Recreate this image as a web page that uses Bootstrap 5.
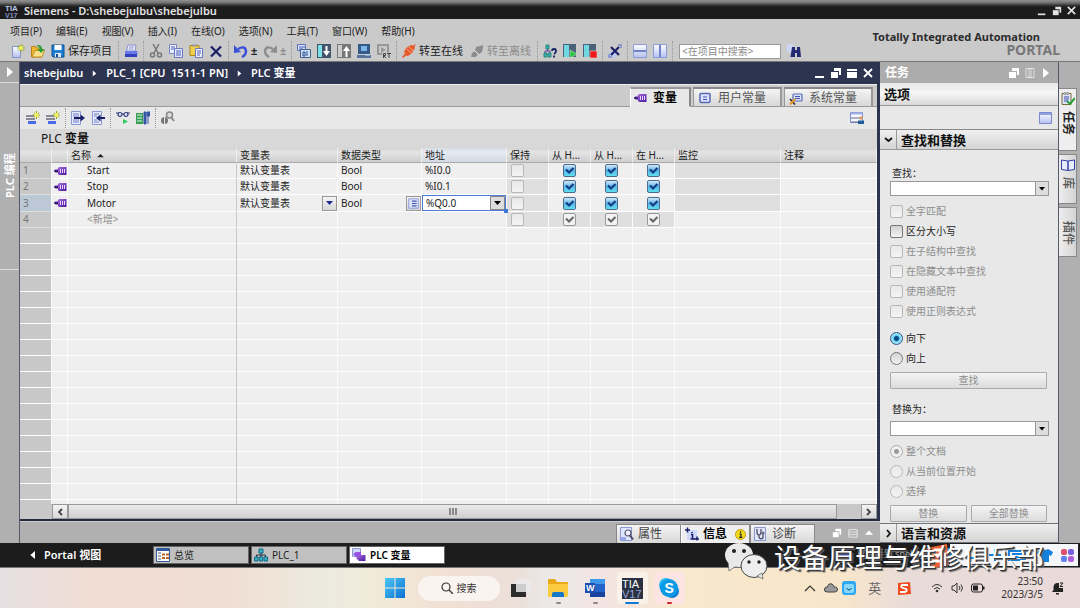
<!DOCTYPE html>
<html lang="zh-CN">
<head>
<meta charset="utf-8">
<meta name="viewport" content="width=device-width, initial-scale=1">
<title>Siemens - D:\shebejulbu\shebejulbu</title>
<link href="https://cdn.jsdelivr.net/npm/bootstrap@5.3.0/dist/css/bootstrap.min.css" rel="stylesheet">
<style>
:root{--navy:#2d3450;--strip:#cacaca;--panel:#e8e8e8;--rail:#b0b0b0;--line:#8e8e8e;--face:linear-gradient(#f4f4f4,#d8d8d8)}
body{font-family:"Noto Sans","Noto Sans CJK SC",sans-serif;font-size:10px;line-height:16px;color:#222;background:#cacaca}
button{border:0;background:none;padding:0;color:inherit;font:inherit;line-height:16px}
a{color:inherit;text-decoration:none}
svg{display:block;flex:none}
.i14{width:14px;height:14px}
.titlebar{height:19px;background:linear-gradient(#929292,#6e6e6e 3px,#3a3a3a 5px,#1c1c1c 7px);color:#e2e2e2;font-size:11px;font-weight:600;padding:2px 3px 0 5px}
.apphead{background:var(--strip);height:43px;border-bottom:1px solid #777}
.menus{gap:14px;padding:4px 10px 0;height:21px}
.tools{height:22px;padding-left:8px;font-size:11px}
.tbtn{display:flex;align-items:center;padding:0 3px;height:20px}
.tbtn.wide{width:68px;gap:3px;white-space:nowrap}
.tbtn.pm{padding:0;width:9px}
.tsep{width:1px;height:20px;margin:0 2px;border-left:1px dotted #999;flex:none}
.off{color:#8d8d8d}
.seek{width:102px;height:15px;border:1px solid #999;background:#fff;font-size:10px;padding:0 2px;margin:0 3px 0 4px;border-radius:0;line-height:13px;outline:0}
.seek::placeholder{color:#8a8a8a;opacity:1}
.brand{padding:12px 20px 0 0;text-align:right;line-height:12px;font-weight:700;font-size:11px;color:#2c2c2c}
.brand div+div{color:#777;font-size:14px;margin-right:-20px;line-height:14px}
.rail-l{width:20px;background:var(--rail);border-right:1px solid #555a66;color:#fff;flex:none}
.rail-l .flip{height:21px;width:100%;border-bottom:1px solid #ddd;background:#a6a6a6}
.rail-l .vert{height:187px;width:100%;writing-mode:vertical-rl;text-orientation:sideways;transform:rotate(180deg);font-weight:700;font-size:11px;line-height:17px;text-align:center;border-top:1px solid #ddd}
.work{min-width:0;background:var(--rail)}
.crumbs{height:22px;background:var(--navy);color:#fff;font-size:11px;font-weight:600;padding:0 3px 0 4px}
.crumbs .path{gap:8px}
.editor{border-right:3px solid var(--navy);border-bottom:2px solid #232a3d}
.tabstrip{height:23px;background:#cbcbcb;border-top:1px solid #eee;border-bottom:1px solid #999;padding-right:4px;gap:2px}
.etab{height:20px;width:89px;margin-bottom:-1px;border:1px solid #999;border-top:2px solid #888;border-right:2px solid #999;background:var(--face);color:#555;font-size:12px;padding:0 4px;gap:6px;display:flex;align-items:center}
.etab.now{width:61px;padding:0 2px;background:#e8e8e8;border-color:#999 #888 #e8e8e8 #fff;color:#000;font-weight:700}
.etools{height:22px;background:var(--panel);padding:0 10px 0 3px}
.caption-row{height:19px;background:#d8d8d8;font-size:12px;color:#111;padding-left:21px;line-height:19px}
.caption-row b{font-weight:600}
.gridbox{flex:1 1 auto;display:flex;background:#efefef}
.tags{table-layout:fixed;width:100%;height:100%;border-collapse:separate;border-spacing:0}
.tags th{height:15px;padding:0 3px;line-height:13px;font-weight:400;font-size:10px;background:linear-gradient(#d2d2d2,#e4e4e4 4px,#cfcfcf);border-right:1px solid #eee;border-bottom:1px solid #aaa;white-space:nowrap;overflow:hidden}
.tags th.hot{background:linear-gradient(#d5dbe4,#e6ebf3 4px,#d3dae5)}
.tags td{height:16px;padding:0 3px;line-height:15px;border-bottom:1px solid #fff;border-right:1px solid #fafafa;white-space:nowrap;overflow:hidden}
.tags td:first-child{background:#c8c8c8;color:#777;border-bottom-color:#ddd}
.tags tr.cur td:first-child{background:#bcc8d6}
.tags .nm{padding-left:19px}
.tags td.dim{background:#dfdfdf}
.tags .mid{text-align:center;padding:0}
.tags .rest td{height:auto;border-bottom:0;background-image:repeating-linear-gradient(transparent 0 15px,#fff 15px 16px)}
.tags td:nth-child(3),.tags .rest td:nth-child(3){border-right-color:#c8c8c8}
.tags .kind{padding:0 1px}
.mini{width:15px;height:15px;border:1px solid #999;background:var(--face);display:flex;align-items:center;justify-content:center}
.tags td.edit{padding:0;overflow:visible;position:relative}
.addr{display:block;width:100%;height:16px;appearance:none;border:1px solid #4a7bd0;border-radius:0;padding:0 3px;font-size:10px;line-height:12px;color:#222;outline:0;background:#fff url("data:image/svg+xml,%3Csvg xmlns='http://www.w3.org/2000/svg' width='15' height='14'%3E%3Cpath fill='%23ddd' stroke='%23888' d='M.5.5h14v13H.5z'/%3E%3Cpath d='M4 5h7l-3.500 4z'/%3E%3C/svg%3E") right center no-repeat}
.knob{position:absolute;right:-2px;bottom:-2px;width:4px;height:4px;background:#3c78d8;z-index:1}
.tick,.dot{appearance:none;flex:none;width:13px;height:13px;margin:0;border:1px solid #777;border-radius:2px;background:linear-gradient(#d2d2d2,#f2f2f2);vertical-align:middle}
.dot{border-radius:50%}
.tags .tick{display:inline-block;vertical-align:top;margin-top:1px}
.tick:disabled,.dot:disabled{border-color:#b8b8b8;background:linear-gradient(#e8e8e8,#f4f4f4)}
.tick:checked{border-color:#4d6d8c;background:url("data:image/svg+xml,%3Csvg xmlns='http://www.w3.org/2000/svg' viewBox='0 0 11 11'%3E%3Cpath fill='none' stroke='%23123f86' stroke-width='2.200' d='M2 4.500l3 3L9.500 3'/%3E%3C/svg%3E"),linear-gradient(#d4e8f8,#5cb4e8 50%,#5fe0ee)}
.tick:checked:disabled{border-color:#999;background:url("data:image/svg+xml,%3Csvg xmlns='http://www.w3.org/2000/svg' viewBox='0 0 11 11'%3E%3Cpath fill='none' stroke='%23666' stroke-width='2' d='M2 4.500l3 3L9.500 3'/%3E%3C/svg%3E"),#f2f2f2}
.dot:checked{border-color:#31567c;background:radial-gradient(#0c4a86 0 2px,#62ccf2 3px,#a5e6fa 5px,#3f9fd0)}
.dot:checked:disabled{border-color:#aaa;background:radial-gradient(#999 0 2px,#f0f0f0 3px)}
.hscroll{height:15px;margin-left:32px}
.hwrap{background:#c8c8c8}
.sbtn{width:16px;height:15px;border:1px solid #999;background:var(--face);display:flex;align-items:center;justify-content:center}
.thumb{flex:1;margin-right:24px;border:1px solid #999;background:linear-gradient(#eaeaea,#cfcfcf);display:flex;align-items:center;justify-content:center;gap:1px}
.thumb i{width:2px;height:7px;background:#888}
.inspector{height:22px;border-top:1px solid #ccc;padding:2px 5px 0 0}
.itab{width:65px;height:19px;border:1px solid #888;border-bottom:0;background:var(--face);font-size:12px;color:#444;display:flex;align-items:center;gap:4px;padding:0 3px}
.itab.now{width:69px;background:#eee;color:#000;font-weight:700;border-left-color:#fff}
.tasks{width:179px;background:var(--panel);flex:none;border-right:1px solid #555a66}
.tasks .thead-bar{height:21px;background:#acacac;color:#fff;font-size:12px;font-weight:600;padding:0 6px 0 5px}
.tasks .opts{height:23px;border-bottom:1px solid #999;background:linear-gradient(#e8e8e8,#f6f6f6 10px,#d8d8d8);font-size:13px;font-weight:700;color:#111;padding-left:4px;line-height:22px}
.tasks .otools{height:24px;padding:0 5px;border-bottom:1px solid #888}
.fold{height:20px;width:100%;border-bottom:1px solid #999;background:linear-gradient(#efefef,#d4d4d4);font-size:13px;font-weight:700;color:#111;display:flex;align-items:center}
.fold .chev{width:17px;height:19px;border-right:1px solid #999;display:flex;align-items:center;justify-content:center;margin-right:4px}
.find{padding:15px 10px 0;flex:1}
.find .cap{height:16px;padding-left:2px;display:block}
.combo{display:block;width:159px;height:15px;appearance:none;border:1px solid #999;border-radius:0;outline:0;background:#fff url("data:image/svg+xml,%3Csvg xmlns='http://www.w3.org/2000/svg' width='13' height='13'%3E%3Cpath fill='%23ddd' stroke='%23999' d='M.5-.5h14v14H.5z'/%3E%3Cpath d='M4 5h6L7 8.500z'/%3E%3C/svg%3E") right center no-repeat}
.opt{height:20px;display:flex;align-items:center;gap:3px;white-space:nowrap}
.optset{margin-top:5px}
.optset+.optset{margin-top:7px}
.push{height:17px;border:1px solid #aaa;border-radius:1px;background:linear-gradient(#f4f4f4,#dcdcdc);color:#8d8d8d;line-height:15px;width:157px;display:block}
.push+.cap{margin-top:12px}
.pair{width:157px}
.rail-r{width:21px;background:var(--rail);flex:none;padding:26px 3px 0 0;gap:3px}
.vtab{width:18px;height:50px;border:1px solid #888;border-left:0;background:linear-gradient(90deg,#eee,#d4d4d4);display:flex;flex-direction:column;align-items:center;gap:5px;padding-top:3px;font-size:12px;color:#555;font-weight:500}
.vtab span{writing-mode:vertical-rl;text-orientation:sideways;line-height:14px}
.vtab.now{height:63px;color:#222;background:#eee;font-weight:600}
.portal{height:25px;background:#1c1c1c;border-bottom:1px solid #777;padding:3px 2px 0 0;position:relative}
.portal .go{width:153px;padding-left:29px;color:#fff;font-weight:600;font-size:11px;height:18px;gap:7px}
.wtab{width:96px;height:18px;margin-right:2px;background:#c0c0c0;border:1px solid #666;display:flex;align-items:center;gap:4px;padding:0 2px}
.wtab.now{background:#fff;font-weight:600;color:#000}
.ime{width:128px;height:22px;margin-top:-2px;background:#f4f6fa}
.conn{color:#aaa;font-size:9px;white-space:nowrap}
.mark-over{position:absolute;right:36px;top:-1px;color:#fff;z-index:3;gap:6px;pointer-events:none}
.mark-over span{font-size:27px;line-height:32px;text-shadow:1px 1px 0 #333,2px 2px 1px #666}
.desk{height:40px;padding-left:8px;color:#333;background:linear-gradient(90deg,#e6dfe2,#f2ddd3 9%,#efdcd2 20%,#f0e2d6 24%,#ecebe0 30%,#f1ead8 35%,#f1dfd4 42%,#ebe0da 48%,#ebe9e8 51%,#f3e4e2 56%,#f8e8cc 64%,#f8e6ca 78%,#e9dcd8 84%,#e9dad9)}
.desk .side{flex:1 1 0;min-width:0}
.desk .hit{width:31px;height:32px;margin:0 3px;border-radius:4px;position:relative;display:flex;align-items:center;justify-content:center}
.desk .hit::after{content:"";position:absolute;bottom:0;width:5px;height:2px;border-radius:1px;background:var(--u,transparent)}
.desk .hit.live{background:#faf1e8}
.desk .hit.live::after{width:14px}
.pill{width:82px;height:25px;border-radius:13px;background:#faf4f1;margin:0 3px 0 13px;gap:4px;font-size:10px}
.lang-ind{font-size:13px;color:#666}
.clock{font-size:10px;line-height:13px;text-align:right}
</style>
</head>
<body class="d-flex flex-column min-vh-100">
<svg width="0" height="0" class="position-absolute" aria-hidden="true">
<defs>
<linearGradient id="pg" x2="1" y2="1"><stop stop-color="#b070e8"/><stop offset="1" stop-color="#4a1a9a"/></linearGradient>
<linearGradient id="wg" x2="1" y2="1"><stop stop-color="#4cc8f8"/><stop offset="1" stop-color="#0a70d0"/></linearGradient>
<linearGradient id="bg" x2="0" y2="1"><stop stop-color="#fff"/><stop offset="1" stop-color="#b4c0f0"/></linearGradient>
</defs>
<symbol id="new" viewBox="0 0 14 14"><path d="M1.500 2.500h8v11h-8z" fill="url(#bg)" stroke="#8492c8"/><path d="M10 0v8M6 4h8M7.200 1.200l5.600 5.600M12.800 1.200L7.200 6.800" stroke="#8cae18"/><circle cx="10" cy="4" r="2" fill="#f4f050"/></symbol>
<symbol id="open" viewBox="0 0 14 14"><path d="M.5 2.500h4l1 1.500h5v9H.5z" fill="#f0b830" stroke="#b8801a"/><path d="M1 13l3-6.500h9.500L11 13z" fill="#fbe088" stroke="#c08a20"/><path d="M5 2q5-3 6 3h2.500L10 9 6.500 5H9Q8 1.500 5 2z" fill="#28a038"/></symbol>
<symbol id="save" viewBox="0 0 14 14"><path d="M1 1h12v12H2l-1-1z" fill="#1e7fd0" stroke="#0d4f94"/><path d="M3.500 1h7v5h-7z" fill="#fff"/><path d="M4 9h6v4H4z" fill="#e0e8f0"/><path d="M5 10h2v3H5z" fill="#124e90"/></symbol>
<symbol id="print" viewBox="0 0 14 14"><path d="M4 1h8l-1 6H2.500z" fill="#f2f4ff" stroke="#8890c8"/><path d="M1 7h12.500v4H1z" fill="#6a7ae8"/><path d="M1 10h12v3H1z" fill="#3040c0"/><path d="M5 3h5M4.500 5h5" stroke="#8890c8"/></symbol>
<symbol id="cut" viewBox="0 0 14 14"><g fill="none" stroke="#777" stroke-width="1.500"><path d="M4 0l5 9M10 0L5 9"/><circle cx="3.500" cy="11" r="2"/><circle cx="10.500" cy="11" r="2"/></g></symbol>
<symbol id="copy" viewBox="0 0 14 14"><path d="M.5.500h7v9h-7z" fill="#e8ecff" stroke="#7a86c4"/><path d="M5.500 4.500h8v9h-8z" fill="#dfe5ff" stroke="#6a78c0"/><path d="M2 3h4M2 5h3M7 7h5M7 9h5M7 11h5" stroke="#5363b8"/></symbol>
<symbol id="paste" viewBox="0 0 14 14"><path d="M1 1.500h9v10H1z" fill="#f2cf4a" stroke="#a88618"/><path d="M3 .5h5v2H3z" fill="#999"/><path d="M6.500 4.500h7v9h-7z" fill="#eef" stroke="#6a78c0"/><path d="M8 7h4M8 9h4M8 11h3" stroke="#5363b8"/></symbol>
<symbol id="del" viewBox="0 0 14 14"><path d="M2 2.500l10 10M12 2.500l-10 10" stroke="#1b1f66" stroke-width="2.200"/></symbol>
<symbol id="undo" viewBox="0 0 14 14"><path d="M4 5q7-4 8 2 0 4-4 6" fill="none" stroke="currentColor" stroke-width="2.400"/><path d="M0 1v8l7-1z" fill="currentColor"/></symbol>
<symbol id="redo" viewBox="0 0 14 14"><path d="M10 5q-7-4-8 2 0 4 4 6" fill="none" stroke="currentColor" stroke-width="2.400"/><path d="M14 1v8L7 8z" fill="currentColor"/></symbol>
<symbol id="comp" viewBox="0 0 14 14"><path d="M.5.500h8v6h-8z" fill="#dbe2ff" stroke="#5b6fb8"/><path d="M2 3h6M2 5h4" stroke="#4460b0"/><path d="M3.500 5.500h10v8h-10z" fill="#cfe0f4" stroke="#406090"/><path d="M6 8h2v4H6zM10 7v5" stroke="#244a90" fill="none"/></symbol>
<symbol id="down" viewBox="0 0 14 14"><path d="M0 0h14v14H0z" fill="#44546a"/><path d="M1 1h4v12H1z" fill="#7be0ea"/><path d="M9.500 2v6" stroke="#fff" stroke-width="2"/><path d="M6 7h7l-3.500 5z" fill="#fff"/></symbol>
<symbol id="up" viewBox="0 0 14 14"><path d="M0 0h14v14H0z" fill="#777"/><path d="M1 1h4v12H1z" fill="#ccc"/><path d="M9.500 6v7" stroke="#fff" stroke-width="2"/><path d="M6 7h7L9.500 2z" fill="#fff"/></symbol>
<symbol id="sim" viewBox="0 0 14 14"><path d="M1 0h12v10H1z" fill="#345a88"/><path d="M4 2h6v5H4z" fill="#7ab6ec"/><path d="M0 11h14v3H0z" fill="#55739c"/><path d="M8 11h5" stroke="#bde"/></symbol>
<symbol id="rt" viewBox="0 0 14 14"><path d="M1 1h10v9H1z" fill="none" stroke="#888" stroke-width="1.500"/><path d="M4 3l5 3-5 3z" fill="#999"/><path d="M5 8.500h9V14H5z" fill="#c8c8c8"/><path d="M6.500 14V9.500h2v2h-2l2.500 2.500M10 9.500h4M12 9.500V14" fill="none" stroke="#444"/></symbol>
<symbol id="plug" viewBox="0 0 14 14"><path d="M14 0l-3 1.500L9 1 4 4 2 8l1 1.500L0 13l1 1 3-2.500L6 12l4-3 3-5-.5-1.500z" fill="currentColor"/><path d="M4.500 5l5 4M7 3l4.500 4" stroke="#fff" stroke-opacity=".5"/></symbol>
<symbol id="unplug" viewBox="0 0 14 14"><path d="M13 1l-3 1-4 1-1 3 4 4 3-2 1-4zM1 13l1-4 3-2 3 3-2 3z" fill="currentColor"/><path d="M4 6l5 5" stroke="#ddd"/></symbol>
<symbol id="netq" viewBox="0 0 14 14"><path d="M3 1h3v4H3zM1 9h3v4H1zM5 9h3v4H5z" fill="#2cb2b4" stroke="#387"/><path d="M4.500 5v2M2 9V7h5v2" fill="none" stroke="#6040a0"/><path d="M9 7q0-2 2-2t2 2-2 3M11 11.500v2" fill="none" stroke="#112266" stroke-width="1.800"/></symbol>
<symbol id="run" viewBox="0 0 14 14"><path d="M0 0h13v13H0z" fill="#4c6078"/><path d="M1 1h5v12H1z" fill="#70d8e0"/><path d="M7 6l7 4-7 4z" fill="#28c83c" stroke="#eee" stroke-width=".5"/></symbol>
<symbol id="stop" viewBox="0 0 14 14"><path d="M0 0h13v13H0z" fill="#4c6078"/><path d="M1 1h5v12H1z" fill="#70d8e0"/><path d="M7 7h7v7H7z" fill="#f01818" stroke="#eee" stroke-width=".5"/></symbol>
<symbol id="xref" viewBox="0 0 14 14"><path d="M1 8h7v5H1z" fill="#bcc8f4"/><path d="M3 3l8 8M11 3L3 11" stroke="#1b1f66" stroke-width="2.200"/><path d="M10 1h3v3M1 10v3h3" fill="none" stroke="#7c8ad0" stroke-width="1.500"/></symbol>
<symbol id="sph" viewBox="0 0 14 14"><path d="M.5.500h13v13H.5z" fill="url(#bg)" stroke="#8d9ad8"/><path d="M1 7h12" stroke="#7482cc" stroke-width="2"/></symbol>
<symbol id="spv" viewBox="0 0 14 14"><path d="M.5.500h13v13H.5z" fill="url(#bg)" stroke="#8d9ad8"/><path d="M7 1v12" stroke="#7482cc" stroke-width="2"/></symbol>
<symbol id="bino" viewBox="0 0 14 14"><path d="M0 0h6v8H0z" fill="#cdd5f6"/><path d="M5 3h3v3h2V3h3l1 10H10V9H8v4H3.500z" fill="#242a70"/></symbol>
<symbol id="tag" viewBox="0 0 14 14"><path d="M3 7l3-4h7.500v8H6z" fill="url(#pg)"/><path d="M1 7h4M3 5.500v3" stroke="#341070" stroke-width="1.500"/><path d="M7 5h5v4H7z" fill="#e8d8fa"/><path d="M8.500 5v4M10.500 5v4" stroke="#6a30b8"/></symbol>
<symbol id="cst" viewBox="0 0 14 14"><rect x="2" y="2.500" width="10" height="9" rx="1" fill="#dbe2ff" stroke="#5868b4" stroke-width="1.500"/><path d="M5 6h4M5 8.500h4" stroke="#4454a8"/></symbol>
<symbol id="sys" viewBox="0 0 14 14"><rect x="4" y="3" width="9" height="7" rx="1" fill="#dbe2ff" stroke="#5868b4" stroke-width="1.200"/><path d="M6 5.500h5M6 7.500h5" stroke="#4454a8"/><path d="M1 8l5 5.500" stroke="#222" stroke-width="1.500"/><path d="M6 8l-5 5.500" stroke="#e89a20" stroke-width="2"/></symbol>
<symbol id="addrow" viewBox="0 0 14 14"><path d="M0 5h8M0 8h9" stroke="#889" stroke-width="2"/><path d="M2 11.500h8" stroke="#4a68e8" stroke-width="3"/><path d="M10.500 0v8M6.500 4h8M8 1.500L13 6.500M13 1.500L8 6.500" stroke="#92a818"/><circle cx="10.500" cy="4" r="2" fill="#f8f460"/></symbol>
<symbol id="exp" viewBox="0 0 14 14"><path d="M.5.500h9v13h-9z" fill="#e6eaff" stroke="#8c98d0"/><path d="M2 3h6M2 5h6M2 9h6M2 11h6" stroke="#7380c0"/><path d="M3 7h8" stroke="#1b1f66" stroke-width="2"/><path d="M9.500 3.500L14 7l-4.500 3.500z" fill="#1b1f66"/></symbol>
<symbol id="imp" viewBox="0 0 14 14"><path d="M1.500.500h9v13h-9z" fill="#e6eaff" stroke="#8c98d0"/><path d="M3 3h5M3 5h3M3 9h3M3 11h5" stroke="#7380c0"/><path d="M8 7h6" stroke="#1b1f66" stroke-width="2"/><path d="M9.500 3.500L5 7l4.500 3.500z" fill="#1b1f66"/></symbol>
<symbol id="watch" viewBox="0 0 14 14"><g fill="#dfe4f4" stroke="#303878" stroke-width="1.200"><circle cx="4" cy="3.500" r="2"/><circle cx="10" cy="3.500" r="2"/></g><path d="M6 3h2M0 2h3M11 2h3" stroke="#303878" stroke-width="1.200"/><path d="M7 8l5 2.500L7 13z" fill="#2ccc60"/></symbol>
<symbol id="snap" viewBox="0 0 14 14"><path d="M0 2h7v11H0z" fill="#3c9c54"/><path d="M1 4h5M1 7h5M1 10h5" stroke="#cfe" /><path d="M8 1h2v12H8zM12 1v12M11 1h3v4h-3z" fill="#3454a4" stroke="#3454a4"/></symbol>
<symbol id="search2" viewBox="0 0 14 14"><circle cx="8.500" cy="4" r="3" fill="#ddd" stroke="#888" stroke-width="1.500"/><path d="M10 6l3 4" stroke="#888" stroke-width="2"/><circle cx="3.500" cy="9.500" r="3.500" fill="#777"/><path d="M3.500 6v7" stroke="#ddd"/></symbol>
<symbol id="user" viewBox="0 0 14 14"><path d="M.5 1.500h12v10H.5z" fill="#f8f9ff" stroke="#8492d0"/><path d="M1 2.500h11" stroke="#a4b0e8" stroke-width="2"/><path d="M1 7h9M1 11h8" stroke="#668"/><circle cx="11" cy="7" r="1.800" fill="#d8a060"/><path d="M8 13V9.500h6V13z" fill="#1e5c9c"/></symbol>
<symbol id="win" viewBox="0 0 14 14"><path d="M.5 1.500h12v11H.5z" fill="url(#bg)" stroke="#7a88cc"/><path d="M1 3h11" stroke="#90a0e0" stroke-width="2"/></symbol>
<symbol id="min" viewBox="0 0 12 12"><path d="M1 9h9v2H1z" fill="currentColor"/></symbol>
<symbol id="rest" viewBox="0 0 12 12"><path d="M4 1h7v7H9V4H4z" fill="currentColor"/><path d="M1 5h7v6H1z" fill="currentColor"/></symbol>
<symbol id="max" viewBox="0 0 12 12"><path d="M1 2h10v2H1zM1 5h10v6H1z" fill="currentColor"/></symbol>
<symbol id="cls" viewBox="0 0 12 12"><path d="M2 2l8 8M10 2l-8 8" stroke="currentColor" stroke-width="1.800"/></symbol>
<symbol id="cols" viewBox="0 0 12 12"><path d="M2 1.500h8v9H2zM5 1v10M7 1v10" fill="none" stroke="currentColor" opacity=".6"/></symbol>
<symbol id="rarr" viewBox="0 0 12 12"><path d="M3 1l6 5-6 5z" fill="currentColor"/></symbol>
<symbol id="larr" viewBox="0 0 12 12"><path d="M9 0L2 6l7 6z" fill="currentColor"/></symbol>
<symbol id="uarr" viewBox="0 0 12 12"><path d="M1 8h10L6 3z" fill="currentColor"/></symbol>
<symbol id="rows" viewBox="0 0 12 12"><path d="M1 2h10v9H1zM1 5h10M1 8h10" fill="none" stroke="currentColor" opacity=".8"/></symbol>
<symbol id="prop" viewBox="0 0 14 14"><path d="M.5.500h11v13H.5z" fill="#dfe5ff" stroke="#8c98d0"/><circle cx="8" cy="6" r="3" fill="#eef" stroke="#556" stroke-width="1.200"/><path d="M10 8.500l3 4" stroke="#446" stroke-width="2"/><path d="M1 10h5v3H1z" fill="#98a8e8"/></symbol>
<symbol id="info" viewBox="0 0 14 14"><path d="M2 3h10v10H2z" fill="#cfd8fa"/><path d="M7 5v1M6 7.500h1.500V12M5.500 12h4" stroke="#1b2068" stroke-width="1.600" fill="none"/><path d="M0 3h5M2.500.500v5M9 12h5M12 9.500v4" stroke="#1b2068" stroke-width="1.500"/></symbol>
<symbol id="diag" viewBox="0 0 14 14"><path d="M.5.500h11v13H.5z" fill="#dfe5ff" stroke="#8c98d0"/><path d="M3 2v3q0 3 2 3t2-3V2M5 8v2q1 3 4 1V7" fill="none" stroke="#445" stroke-width="1.200"/><circle cx="9" cy="6" r="1.500" fill="#667"/></symbol>
<symbol id="over" viewBox="0 0 14 14"><path d="M.5.500h13v13H.5z" fill="#fff" stroke="#345a9c"/><path d="M1 2h12" stroke="#345a9c" stroke-width="2"/><path d="M2 5h3M2 8h3M2 11h3" stroke="#557"/><path d="M6 6.500h3M10 6.500h3M6 10h3M10 10h3" stroke="#c06020" stroke-width="2"/></symbol>
<symbol id="plc" viewBox="0 0 14 14"><path d="M7 4v5M2.500 9V7h9v2" fill="none" stroke="#234"/><path d="M5 1h4v4H5zM.5 9h3.500v4H.5zM5.200 9h3.600v4H5.200zM10 9h3.500v4H10z" fill="#38b4bc" stroke="#168"/></symbol>
<symbol id="tags" viewBox="0 0 14 14"><path d="M.5.500h8v8h-8z" fill="#cfd8fa" stroke="#8c98d0"/><path d="M1 6l3-2h5v5H4z" fill="#9a50e0"/><path d="M4 10l3-3h6.500v6H7z" fill="url(#pg)"/></symbol>
</svg>

<header>
<div class="titlebar d-flex align-items-center">
<svg width="15" height="14" viewBox="0 0 15 14"><g font-family="Liberation Sans" font-weight="bold" fill="#bbc6e4"><text x="0" y="7" font-size="8">TIA</text><text x="0" y="14" font-size="7" fill="#8795c8">V17</text></g></svg>
<span class="ms-1 me-auto">Siemens - D:\shebejulbu\shebejulbu</span>
<button aria-label="最小化"><svg width="12" height="10"><use href="#min"/></svg></button>
<button aria-label="还原" class="ms-1"><svg width="10" height="10"><use href="#rest"/></svg></button>
<button aria-label="关闭" class="ms-1"><svg width="11" height="11"><use href="#cls"/></svg></button>
</div>
<div class="apphead d-flex justify-content-between">
<div>
<nav class="menus d-flex"><a href="#">项目(P)</a><a href="#">编辑(E)</a><a href="#">视图(V)</a><a href="#">插入(I)</a><a href="#">在线(O)</a><a href="#">选项(N)</a><a href="#">工具(T)</a><a href="#">窗口(W)</a><a href="#">帮助(H)</a></nav>
<div class="tools d-flex align-items-center">
<button class="tbtn" aria-label="新建"><svg class="i14"><use href="#new"/></svg></button><button class="tbtn" aria-label="打开"><svg class="i14"><use href="#open"/></svg></button><button class="tbtn wide"><svg class="i14"><use href="#save"/></svg>保存项目</button><i class="tsep"></i>
<button class="tbtn" aria-label="打印"><svg class="i14"><use href="#print"/></svg></button><i class="tsep"></i>
<button class="tbtn" aria-label="剪切"><svg class="i14"><use href="#cut"/></svg></button><button class="tbtn" aria-label="复制"><svg class="i14"><use href="#copy"/></svg></button><button class="tbtn" aria-label="粘贴"><svg class="i14"><use href="#paste"/></svg></button><button class="tbtn" aria-label="删除"><svg class="i14"><use href="#del"/></svg></button><i class="tsep"></i>
<button class="tbtn" aria-label="撤销" style="color:#3a50d8"><svg class="i14"><use href="#undo"/></svg></button><button class="tbtn pm fw-bold">±</button><button class="tbtn off" aria-label="重做"><svg class="i14"><use href="#redo"/></svg></button><button class="tbtn pm fw-bold off">±</button><i class="tsep"></i>
<button class="tbtn" aria-label="编译"><svg class="i14"><use href="#comp"/></svg></button><button class="tbtn" aria-label="下载"><svg class="i14"><use href="#down"/></svg></button><button class="tbtn" aria-label="上传"><svg class="i14"><use href="#up"/></svg></button><button class="tbtn" aria-label="仿真"><svg class="i14"><use href="#sim"/></svg></button><button class="tbtn" aria-label="运行系统"><svg class="i14"><use href="#rt"/></svg></button><i class="tsep"></i>
<button class="tbtn wide"><svg class="i14" style="color:#e8582a"><use href="#plug"/></svg>转至在线</button><button class="tbtn wide off"><svg class="i14"><use href="#unplug"/></svg>转至离线</button><i class="tsep"></i>
<button class="tbtn" aria-label="可访问的设备"><svg class="i14"><use href="#netq"/></svg></button><button class="tbtn" aria-label="启动"><svg class="i14"><use href="#run"/></svg></button><button class="tbtn" aria-label="停止"><svg class="i14"><use href="#stop"/></svg></button><i class="tsep"></i>
<button class="tbtn" aria-label="交叉引用"><svg class="i14"><use href="#xref"/></svg></button><i class="tsep"></i>
<button class="tbtn" aria-label="水平拆分"><svg class="i14"><use href="#sph"/></svg></button><button class="tbtn" aria-label="垂直拆分"><svg class="i14"><use href="#spv"/></svg></button><i class="tsep"></i>
<input class="seek" type="text" placeholder="&lt;在项目中搜索&gt;" aria-label="在项目中搜索"><button class="tbtn" aria-label="搜索"><svg class="i14"><use href="#bino"/></svg></button>
</div>
</div>
<div class="brand me-3 pe-4"><div>Totally Integrated Automation</div><div>PORTAL</div></div>
</div>
</header>

<main class="d-flex flex-grow-1">
<aside class="rail-l"><button class="flip d-flex align-items-center justify-content-center" aria-label="展开"><svg width="12" height="12"><use href="#rarr"/></svg></button><button class="vert">PLC 编程</button></aside>

<section class="work d-flex flex-column flex-grow-1">
<div class="editor d-flex flex-column flex-grow-1">
<div class="crumbs d-flex align-items-center"><div class="path d-flex align-items-center me-auto"><span>shebejulbu</span><svg width="7" height="7"><use href="#rarr"/></svg><span>PLC_1&nbsp;[CPU&nbsp; 1511-1 PN]</span><svg width="7" height="7"><use href="#rarr"/></svg><span>PLC 变量</span></div>
<div class="d-flex gap-1"><svg width="12" height="12"><use href="#min"/></svg><svg width="12" height="12"><use href="#rest"/></svg><svg width="12" height="12"><use href="#max"/></svg><svg width="12" height="12"><use href="#cls"/></svg></div></div>
<div class="tabstrip d-flex justify-content-end align-items-end"><button class="etab now"><svg class="i14"><use href="#tag"/></svg>变量</button><button class="etab"><svg class="i14"><use href="#cst"/></svg>用户常量</button><button class="etab"><svg class="i14"><use href="#sys"/></svg>系统常量</button></div>
<div class="etools d-flex align-items-center"><button class="tbtn" aria-label="插入行"><svg class="i14"><use href="#addrow"/></svg></button><button class="tbtn" aria-label="添加行"><svg class="i14"><use href="#addrow"/></svg></button><i class="tsep"></i><button class="tbtn" aria-label="导出"><svg class="i14"><use href="#exp"/></svg></button><button class="tbtn" aria-label="导入"><svg class="i14"><use href="#imp"/></svg></button><i class="tsep"></i><button class="tbtn" aria-label="监视"><svg class="i14"><use href="#watch"/></svg></button><button class="tbtn" aria-label="快照"><svg class="i14"><use href="#snap"/></svg></button><i class="tsep"></i><button class="tbtn" aria-label="查找"><svg class="i14"><use href="#search2"/></svg></button><button class="tbtn ms-auto" aria-label="布局"><svg class="i14"><use href="#user"/></svg></button></div>
<div class="caption-row">PLC <b>变量</b></div>
<div class="gridbox">
<table class="tags">
<colgroup><col style="width:32px"><col style="width:16px"><col style="width:169px"><col style="width:101px"><col style="width:84px"><col style="width:85px"><col style="width:42px"><col style="width:42px"><col style="width:42px"><col style="width:42px"><col style="width:106px"><col></colgroup>
<thead><tr><th></th><th></th><th>名称&ensp;<svg class="d-inline" width="9" height="8"><use href="#uarr"/></svg></th><th>变量表</th><th>数据类型</th><th class="hot">地址</th><th>保持</th><th>从 H...</th><th>从 H...</th><th>在 H...</th><th>监控</th><th>注释</th></tr></thead>
<tbody>
<tr><td>1</td><td class="kind"><svg class="i14"><use href="#tag"/></svg></td><td class="nm">Start</td><td>默认变量表</td><td>Bool</td><td>%I0.0</td><td class="dim ps-1"><input class="tick" type="checkbox" disabled aria-label="保持"></td><td class="mid"><input class="tick" type="checkbox" checked aria-label="可访问"></td><td class="mid"><input class="tick" type="checkbox" checked aria-label="可写"></td><td class="mid"><input class="tick" type="checkbox" checked aria-label="可见"></td><td class="dim"></td><td></td></tr>
<tr><td>2</td><td class="kind"><svg class="i14"><use href="#tag"/></svg></td><td class="nm">Stop</td><td>默认变量表</td><td>Bool</td><td>%I0.1</td><td class="dim ps-1"><input class="tick" type="checkbox" disabled aria-label="保持"></td><td class="mid"><input class="tick" type="checkbox" checked aria-label="可访问"></td><td class="mid"><input class="tick" type="checkbox" checked aria-label="可写"></td><td class="mid"><input class="tick" type="checkbox" checked aria-label="可见"></td><td class="dim"></td><td></td></tr>
<tr class="cur"><td>3</td><td class="kind"><svg class="i14"><use href="#tag"/></svg></td><td class="nm">Motor</td><td class="pe-0"><div class="d-flex justify-content-between">默认变量表<button class="mini" aria-label="选择变量表"><svg width="9" height="6" viewBox="0 0 9 6"><path d="M1 1h7L4.500 5z" fill="#1a2a90"/></svg></button></div></td><td class="pe-0"><div class="d-flex justify-content-between">Bool<button class="mini" aria-label="选择数据类型"><svg width="11" height="11" viewBox="0 0 14 14"><path d="M1 1h12v12H1z" fill="#dfe5ff" stroke="#7a88cc"/><path d="M5 4h6M5 7h6M5 10h6" stroke="#4454a8" stroke-width="1.500"/></svg></button></div></td><td class="edit"><select class="addr" aria-label="地址"><option>%Q0.0</option></select><i class="knob"></i></td><td class="dim ps-1"><input class="tick" type="checkbox" disabled aria-label="保持"></td><td class="mid"><input class="tick" type="checkbox" checked aria-label="可访问"></td><td class="mid"><input class="tick" type="checkbox" checked aria-label="可写"></td><td class="mid"><input class="tick" type="checkbox" checked aria-label="可见"></td><td class="dim"></td><td></td></tr>
<tr><td>4</td><td></td><td class="nm off">&lt;新增&gt;</td><td></td><td></td><td></td><td class="dim ps-1"><input class="tick" type="checkbox" disabled aria-label="保持"></td><td class="mid dim"><input class="tick" type="checkbox" checked disabled aria-label="可访问"></td><td class="mid dim"><input class="tick" type="checkbox" checked disabled aria-label="可写"></td><td class="mid dim"><input class="tick" type="checkbox" checked disabled aria-label="可见"></td><td></td><td></td></tr>
<tr class="rest"><td></td><td></td><td></td><td></td><td></td><td></td><td></td><td></td><td></td><td></td><td></td><td></td></tr>
</tbody>
</table>
</div>
<div class="hwrap"><div class="hscroll d-flex"><button class="sbtn" aria-label="向左"><svg width="8" height="8" viewBox="0 0 8 8"><path d="M6 1L3 4l3 3" fill="none" stroke="#444" stroke-width="1.800"/></svg></button><div class="thumb"><i></i><i></i><i></i></div><button class="sbtn" aria-label="向右"><svg width="8" height="8" viewBox="0 0 8 8"><path d="M2 1l3 3-3 3" fill="none" stroke="#444" stroke-width="1.800"/></svg></button></div></div>
</div>
<div class="inspector d-flex justify-content-end">
<button class="itab"><svg class="i14"><use href="#prop"/></svg>属性</button><button class="itab now"><svg class="i14"><use href="#info"/></svg>信息<svg class="ms-1" width="11" height="11" viewBox="0 0 12 12"><circle cx="6" cy="6" r="5.500" fill="#f2d91c" stroke="#b89a10"/><path d="M6 2.500v1.500M5 5.500h1.500V9M4.500 9.200h3.500" fill="none" stroke="#222" stroke-width="1.300"/></svg></button><button class="itab"><svg class="i14"><use href="#diag"/></svg>诊断</button>
<div class="d-flex gap-1 text-white pt-1 ps-3"><svg width="12" height="10"><use href="#rest"/></svg><svg width="12" height="10"><use href="#rows"/></svg><svg width="12" height="10"><use href="#uarr"/></svg></div>
</div>
</section>

<aside class="tasks d-flex flex-column">
<div class="thead-bar d-flex align-items-center"><span class="me-auto">任务</span><div class="d-flex gap-1"><svg width="12" height="12"><use href="#rest"/></svg><svg width="12" height="12"><use href="#cols"/></svg><svg width="12" height="12"><use href="#rarr"/></svg></div></div>
<div class="opts">选项</div>
<div class="otools d-flex align-items-center justify-content-end"><svg class="i14"><use href="#win"/></svg></div>
<button class="fold"><span class="chev"><svg width="9" height="9" viewBox="0 0 9 9"><path d="M1 3l3.500 3L8 3" fill="none" stroke="#111" stroke-width="1.800"/></svg></span>查找和替换</button>
<div class="find">
<label class="cap" for="q">查找：</label>
<select id="q" class="combo"><option></option></select>
<div class="optset">
<label class="opt off"><input class="tick" type="checkbox" disabled>全字匹配</label>
<label class="opt"><input class="tick" type="checkbox">区分大小写</label>
<label class="opt off"><input class="tick" type="checkbox" disabled>在子结构中查找</label>
<label class="opt off"><input class="tick" type="checkbox" disabled>在隐藏文本中查找</label>
<label class="opt off"><input class="tick" type="checkbox" disabled>使用通配符</label>
<label class="opt off"><input class="tick" type="checkbox" disabled>使用正则表达式</label>
</div>
<div class="optset">
<label class="opt"><input class="dot" type="radio" name="dir" checked>向下</label>
<label class="opt"><input class="dot" type="radio" name="dir">向上</label>
</div>
<button class="push mt-1" disabled>查找</button>
<label class="cap" for="r">替换为：</label>
<select id="r" class="combo mt-1"><option></option></select>
<div class="optset">
<label class="opt off"><input class="dot" type="radio" name="scope" checked disabled>整个文档</label>
<label class="opt off"><input class="dot" type="radio" name="scope" disabled>从当前位置开始</label>
<label class="opt off"><input class="dot" type="radio" name="scope" disabled>选择</label>
</div>
<div class="pair d-flex gap-1 mt-1"><button class="push" disabled>替换</button><button class="push" disabled>全部替换</button></div>
</div>
<button class="fold border-top border-secondary"><span class="chev"><svg width="9" height="9" viewBox="0 0 9 9"><path d="M3 1l3 3.500L3 8" fill="none" stroke="#111" stroke-width="1.800"/></svg></span>语言和资源</button>
</aside>
<nav class="rail-r d-flex flex-column">
<button class="vtab now"><svg class="i14" viewBox="0 0 14 14"><path d="M1 1.500h9v11H1z" fill="#dfe5ff" stroke="#7a6a30"/><path d="M3 0h5v3H3z" fill="#aaa"/><path d="M3 5h5M3 7h5M3 9h4" stroke="#3c4c9c"/><path d="M6 9l3 3 5-6" fill="none" stroke="#28a038" stroke-width="2"/></svg><span>任务</span></button>
<button class="vtab"><svg class="i14" viewBox="0 0 14 14"><path d="M.5 2l6 1 7-1v9.500l-6.500 1-6.500-1z" fill="#e8ecff" stroke="#3440a0"/><path d="M7 3v9" stroke="#3440a0" stroke-width="1.500"/></svg><span>库</span></button>
<button class="vtab justify-content-center"><span>插件</span></button>
</nav>
</main>

<footer>
<div class="portal d-flex">
<button class="go d-flex align-items-center"><svg width="8" height="10" viewBox="0 0 12 12"><use href="#larr"/></svg>Portal 视图</button>
<button class="wtab"><svg class="i14"><use href="#over"/></svg>总览</button><button class="wtab"><svg class="i14"><use href="#plc"/></svg>PLC_1</button><button class="wtab now"><svg class="i14"><use href="#tags"/></svg>PLC 变量</button>
<div class="d-flex ms-auto"><svg class="me-3 mt-1" width="14" height="12" viewBox="0 0 14 14"><path d="M0 0h12v12H0z" fill="#707cb8"/></svg><svg class="me-1 mt-1" width="14" height="10" viewBox="0 0 14 10"><path d="M1 3h7V0l6 5-6 5V7H1z" fill="#2232c0"/></svg><span class="conn pe-2">已连接到 shebejulbu</span>
<div class="ime d-flex align-items-center justify-content-end gap-2 pe-1"><svg width="86" height="16" viewBox="0 0 86 16"><g fill="none" stroke="#1480dc" stroke-width="2"><path d="M2 3h12M5 1v5M11 1v5M8 3v6M1 9h14M8 9l-6 5M8 9l6 5"/><path d="M26 11h8M31 5q5 3 1 6M52 2v12M46 8h12M66 4h16v9H66zM69 7h10M70 10h8"/></g></svg><svg width="16" height="15" viewBox="0 0 16 15"><path d="M5 1q3 2 6 0l5 3-2 4-2-1v7H4V7L2 8 0 4z" fill="#1480dc"/></svg><svg width="13" height="13" viewBox="0 0 13 13"><rect width="6" height="6" rx="2" fill="#e0506a"/><rect x="7" width="6" height="6" rx="2" fill="#7a60e0"/><rect y="7" width="6" height="6" rx="2" fill="#6080f0"/><rect x="7" y="7" width="6" height="6" rx="2" fill="#b060d8"/></svg></div></div>
<div class="mark-over d-flex">
<svg width="44" height="38" viewBox="0 0 44 38"><path d="M4 20l1 9 7-5z" fill="#e9e9e9" stroke="#555" stroke-width=".7"/><ellipse cx="15" cy="13" rx="14" ry="12" fill="#e9e9e9"/><ellipse cx="30" cy="24" rx="13" ry="11.500" fill="#eee" stroke="#444"/><path d="M33 34l6 3-1-6z" fill="#eee" stroke="#555" stroke-width=".7"/><g fill="#222"><circle cx="10" cy="9" r="2"/><circle cx="20" cy="9" r="2"/><circle cx="25" cy="20" r="1.700"/><circle cx="35" cy="20" r="1.700"/></g></svg>
<svg class="position-absolute" style="left:202px;top:1px" width="24" height="26" viewBox="0 0 24 26"><path d="M1 5l20-4 2 21-20 4z" fill="#f0602c"/><path d="M18 7H9q-3 3 2 5l4 1q3 3-1 5H5" fill="none" stroke="#fff" stroke-width="3"/></svg>
<span class="position-relative">设备原理与维修俱乐部</span>
</div>
</div>
<div class="desk d-flex align-items-center">
<div class="side"></div>
<div class="d-flex align-items-center">
<button aria-label="开始"><svg width="20" height="20" viewBox="0 0 20 20"><path d="M0 0h9.500v9.500H0zM10.500 0H20v9.500h-9.500zM0 10.500h9.500V20H0zM10.500 10.500H20V20h-9.500z" fill="url(#wg)"/></svg></button>
<button class="pill d-flex align-items-center justify-content-center"><svg width="12" height="12" viewBox="0 0 12 12"><circle cx="5" cy="5" r="4" fill="none" stroke="#333" stroke-width="1.200"/><path d="M8 8l4 4" stroke="#333" stroke-width="1.300"/></svg>搜索</button>
<button class="hit" aria-label="任务视图"><svg width="20" height="20" viewBox="0 0 20 20"><path d="M0 6h15v13H0z" fill="#2c2c2c"/><path d="M5 1h15v13H5z" fill="#eaeaea" opacity=".85"/></svg></button>
<button class="hit" aria-label="文件资源管理器" style="--u:#888"><svg width="20" height="20" viewBox="0 0 20 20"><path d="M0 2q0-1 1-1h6l2 3h10q1 0 1 1v13H0z" fill="#e8a818"/><path d="M0 6h20v12q0 1-1 1H1q-1 0-1-1z" fill="#fccc40"/><path d="M4 19v-3q0-2 2-2h8q2 0 2 2v3z" fill="#1678c8"/></svg></button>
<button class="hit" aria-label="Word" style="--u:#888"><svg width="20" height="20" viewBox="0 0 20 20"><path d="M5 1h15v18H5z" fill="#2464c8"/><path d="M5 1h15v5H5z" fill="#4098e8"/><path d="M5 14h15v5H5z" fill="#1844a0"/><path d="M0 5h10v10H0z" fill="#1c50b0"/><text x="1" y="13" font-size="9" font-weight="bold" font-family="Liberation Sans" fill="#fff">W</text></svg></button>
<button class="hit live" aria-label="TIA Portal" style="--u:#0f78d4"><svg width="21" height="21" viewBox="0 0 21 21"><path d="M0 0h21v21H0z" fill="#2a3142"/><g font-family="Liberation Sans"><text x="0" y="10" font-size="11" fill="#fff">TIA</text><text x="0" y="20" font-size="11" fill="#9aa8d8">V17</text></g></svg></button>
<button class="hit" aria-label="Skype" style="--u:#c82828;background:#fce4e2"><svg width="20" height="20" viewBox="0 0 20 20"><circle cx="7" cy="7" r="7" fill="#28b8f0"/><circle cx="13" cy="13" r="7" fill="#0c7cd4"/><circle cx="10" cy="10" r="9" fill="#0d9ae4"/><text x="5.500" y="15" font-size="14" font-weight="bold" font-family="Liberation Sans" fill="#fff">S</text></svg></button>
</div>
<div class="side d-flex align-items-center justify-content-end pe-3">
<svg width="12" height="8" viewBox="0 0 12 8"><path d="M1 7l5-5 5 5" fill="none" stroke="#333" stroke-width="1.200"/></svg>
<svg class="ms-2" width="14" height="12" viewBox="0 0 14 12"><path d="M3 10q-3 0-2.500-3Q1 4.500 3.500 5 4 1 8 2q2 1 2 3 4 0 3.500 3-.5 2-3 2z" fill="#999" stroke="#444"/></svg>
<svg class="ms-1 me-2" width="14" height="14" viewBox="0 0 14 14"><rect width="14" height="14" rx="3" fill="#2fa8f4"/><rect x="2" y="3" width="10" height="9" rx="2" fill="#8ad8fc"/><path d="M4.500 7q2.500 4 5 0" fill="none" stroke="#046" /></svg>
<span class="lang-ind ms-1">英</span>
<svg class="ms-3 me-3" width="14" height="13" viewBox="0 0 14 13"><path d="M1 1l12-1 1 12-13 1z" fill="#f04c20"/><path d="M11 3H5q-2 2 1 3l3 1q2 2-1 3H3" fill="none" stroke="#fff" stroke-width="1.800"/></svg>
<svg class="ms-1" width="12" height="10" viewBox="0 0 12 10"><g fill="none" stroke="#333"><path d="M1 4q5-5 10 0M3 6q3-3 6 0"/></g><circle cx="6" cy="8" r="1.300" fill="#333"/></svg>
<svg class="ms-2" width="12" height="12" viewBox="0 0 12 12"><path d="M1 4h2l3-3v10L3 8H1zM8 4q2 2 0 4M10 2.500q3 3.500 0 7" fill="none" stroke="#333"/></svg>
<svg class="ms-2 me-3" width="14" height="10" viewBox="0 0 14 10"><rect x=".5" y="1" width="11" height="8" rx="2" fill="none" stroke="#222"/><path d="M2 2.500h5v5H2zM12 3.500h1.500v3H12z" fill="#222"/></svg>
<div class="clock">23:50<br>2023/3/5</div>
<svg class="ms-2" width="13" height="13" viewBox="0 0 13 13"><path d="M1 10l1.500-2V5Q3 1 6.500 1H8v5h4v4zM5 11h3v1.500H5z" fill="#222"/><path d="M9 1h3L9 4.500h3" fill="none" stroke="#222"/></svg>
</div>
</div>
</footer>
<script src="https://cdn.jsdelivr.net/npm/bootstrap@5.3.0/dist/js/bootstrap.bundle.min.js"></script>
</body>
</html>
